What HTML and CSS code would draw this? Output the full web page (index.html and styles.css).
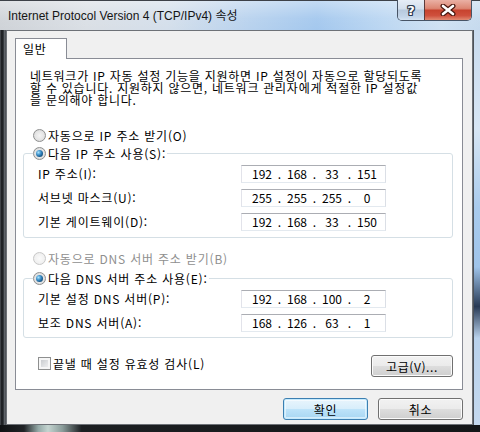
FILE: index.html
```html
<!DOCTYPE html>
<html lang="ko">
<head>
<meta charset="utf-8">
<title>Internet Protocol Version 4 (TCP/IPv4) 속성</title>
<link rel="stylesheet" href="styles.css">
</head>
<body>
<div class="window">
  <div class="titlebar">
    <span class="title">Internet Protocol Version 4 (TCP/IPv4) 속성</span>
    <div class="caption-buttons">
      <span class="cap-btn help">?</span>
      <span class="cap-btn close">
        <svg width="16" height="12" viewBox="0 0 16 12">
          <path d="M3 2 L13 10 M13 2 L3 10" stroke="#4a1810" stroke-width="5" stroke-linecap="round" fill="none"/>
          <path d="M3 2 L13 10 M13 2 L3 10" stroke="#ffffff" stroke-width="2.6" stroke-linecap="round" fill="none"/>
        </svg>
      </span>
    </div>
  </div>
  <div class="middle">
    <div class="frame-left"></div>
    <div class="client">
      <div class="tabs"><span class="tab">일반</span></div>
      <div class="panel">
        <p class="intro">네트워크가 IP 자동 설정 기능을 지원하면 IP 설정이 자동으로 할당되도록<br>할 수 있습니다. 지원하지 않으면, 네트워크 관리자에게 적절한 IP 설정값<br>을 문의해야 합니다.</p>

        <div class="option first"><span class="radio"></span><span>자동으로 IP 주소 받기(O)</span></div>
        <fieldset class="group ip-group">
          <legend class="legend"><span class="radio checked"></span><span>다음 IP 주소 사용(S):</span></legend>
          <div class="fields">
            <span class="label">IP 주소(I):</span>
            <div class="ip"><span>192</span><i>.</i><span>168</span><i>.</i><span>33</span><i>.</i><span>151</span></div>
            <span class="label">서브넷 마스크(U):</span>
            <div class="ip"><span>255</span><i>.</i><span>255</span><i>.</i><span>255</span><i>.</i><span>0</span></div>
            <span class="label">기본 게이트웨이(D):</span>
            <div class="ip"><span>192</span><i>.</i><span>168</span><i>.</i><span>33</span><i>.</i><span>150</span></div>
          </div>
        </fieldset>

        <div class="option second disabled"><span class="radio"></span><span>자동으로 DNS 서버 주소 받기(B)</span></div>
        <fieldset class="group dns-group">
          <legend class="legend"><span class="radio checked"></span><span>다음 DNS 서버 주소 사용(E):</span></legend>
          <div class="fields">
            <span class="label">기본 설정 DNS 서버(P):</span>
            <div class="ip"><span>192</span><i>.</i><span>168</span><i>.</i><span>100</span><i>.</i><span>2</span></div>
            <span class="label">보조 DNS 서버(A):</span>
            <div class="ip"><span>168</span><i>.</i><span>126</span><i>.</i><span>63</span><i>.</i><span>1</span></div>
          </div>
        </fieldset>

        <div class="bottom-row">
          <label class="check"><span class="checkbox"></span><span>끝낼 때 설정 유효성 검사(L)</span></label>
          <span class="button advanced">고급(V)...</span>
        </div>
      </div>
      <div class="dialog-buttons">
        <span class="button default">확인</span>
        <span class="button">취소</span>
      </div>
    </div>
    <div class="frame-right"></div>
  </div>
  <div class="frame-bottom"></div>
</div>
</body>
</html>
```

FILE: styles.css
```css
* { box-sizing: border-box; }

body {
  margin: 0;
  width: 480px;
  height: 432px;
  overflow: hidden;
  background: #1b1d20;
  font-family: "Noto Sans CJK KR", "Noto Sans", sans-serif;
  font-size: 12px;
  color: #000;
}

.window {
  width: 480px;
  height: 432px;
  display: flex;
  flex-direction: column;
}

.titlebar {
  height: 30px;
  display: flex;
  align-items: flex-start;
  background:
    linear-gradient(180deg, rgba(255,255,255,0.35) 0%, rgba(255,255,255,0.05) 60%, rgba(255,255,255,0) 100%),
    linear-gradient(90deg, #cfd3d8 0%, #dadfe5 18%, #d4dfeb 35%, #b8d2ee 52%, #a4c8ee 66%, #bcd7f2 80%, #cfe1f3 92%, #c6daee 100%);
  border-top: 1px solid #3d4148;
}

.title {
  flex: 1;
  margin: 7px 0 0 8px;
  font-family: "Liberation Sans", "Noto Sans CJK KR", sans-serif;
  font-size: 12px;
  line-height: 16px;
  white-space: nowrap;
  color: #151515;
}

.caption-buttons {
  display: flex;
  height: 21px;
  margin-top: -1px;
  margin-right: 8px;
  border: 1px solid #475466;
  border-top: none;
  border-radius: 0 0 5px 5px;
  overflow: hidden;
}

.cap-btn {
  display: flex;
  align-items: center;
  justify-content: center;
  height: 100%;
}

.help {
  width: 26px;
  background: linear-gradient(180deg, #e6edf6 0%, #d3dfec 45%, #b7c9dd 50%, #c4d6ea 85%, #d6e4f2 100%);
  font-family: "DejaVu Sans", sans-serif;
  font-weight: bold;
  font-size: 13px;
  line-height: 1;
  color: #fff;
  text-shadow: 1px 0 0 #2d3b4e, -1px 0 0 #2d3b4e, 0 1px 0 #2d3b4e, 0 -1px 0 #2d3b4e,
               1px 1px 0 #2d3b4e, -1px -1px 0 #2d3b4e, 1px -1px 0 #2d3b4e, -1px 1px 0 #2d3b4e;
}

.close {
  width: 47px;
  border-left: 1px solid #5b3b3b;
  background: linear-gradient(180deg, #eab0a4 0%, #dc8673 42%, #c7432f 52%, #cf503d 78%, #e18a72 100%);
}

.middle {
  flex: 1;
  display: flex;
}

.frame-left {
  width: 6px;
  background: linear-gradient(90deg, #50545a 0%, #15171a 30%, #2c3034 55%, #6a6f75 80%, #3c4045 100%);
}

.frame-right {
  width: 7px;
  background: linear-gradient(180deg, #c9dbee 0%, #d7e6f4 25%, #a9cbed 45%, #9fc4ea 60%, #283a55 70%, #b9d2ec 78%, #c4d8ee 100%);
  border-left: 1px solid #4d5258;
}

.frame-bottom {
  height: 7px;
  background: linear-gradient(90deg, #101214 0%, #202326 5%, #95aaa8 8%, #c4d4d0 10%, #8a9c9a 13%, #1c1f22 17%, #141618 100%);
}

.client {
  width: 467px;
  border: 1px solid #6d7177;
  background: #f0f0f0;
  padding: 7px 9px 0 8px;
  display: flex;
  flex-direction: column;
}

.tabs {
  display: flex;
  height: 20px;
}

.tab {
  position: relative;
  z-index: 1;
  width: 52px;
  height: 21px;
  border: 1px solid #898c95;
  border-bottom: none;
  background: #fff;
  padding-left: 7px;
  line-height: 20px;
  letter-spacing: 0.6px;
}

.panel {
  width: 448px;
  height: 332px;
  border: 1px solid #898c95;
  background: #fff;
}

.intro {
  margin: 0;
  padding: 11px 0 0 14px;
  line-height: 12px;
  white-space: nowrap;
  letter-spacing: 0.75px;
}

.option {
  display: flex;
  align-items: center;
  gap: 2px;
  height: 16px;
  padding-left: 17px;
  white-space: nowrap;
  letter-spacing: 0.8px;
}

.option.first { margin-top: 21px; }
.option.second { margin-top: 12px; }
.option.disabled { color: #8f8f8f; }

.radio {
  width: 13px;
  height: 13px;
  flex: none;
  border-radius: 50%;
  border: 1px solid #8e8f8f;
  background: radial-gradient(circle at 50% 50%, #f4f4f4 0%, #e4e4e4 55%, #cfcfcf 100%);
  display: flex;
  align-items: center;
  justify-content: center;
}

.option.disabled .radio {
  border-color: #c8c8c8;
  background: radial-gradient(circle at 50% 50%, #fbfbfb 0%, #f1f1f1 60%, #e6e6e6 100%);
}

.radio.checked::after {
  content: "";
  width: 7px;
  height: 7px;
  border-radius: 50%;
  background: radial-gradient(circle at 35% 35%, #a7e4ff 0%, #3a8cc6 40%, #12507f 75%, #0b3558 100%);
}

.group {
  margin: 2px 9px 0 7px;
  padding: 4px 0 6px 0;
  min-width: 0;
  border: 1px solid #d5dfe5;
  border-radius: 3px;
}

.dns-group {
  margin-top: 4px;
  padding-bottom: 5px;
}

.legend {
  display: flex;
  align-items: center;
  gap: 2px;
  height: 16px;
  margin-left: 9px;
  padding: 0 1px 0 0;
  white-space: nowrap;
  letter-spacing: 0.8px;
}

.fields {
  display: grid;
  grid-template-columns: 203px 145px;
  grid-auto-rows: 18px;
  row-gap: 6px;
  align-items: center;
  padding-left: 14px;
}

.label {
  white-space: nowrap;
  line-height: 18px;
  letter-spacing: 0.8px;
}

.ip {
  width: 145px;
  height: 18px;
  display: flex;
  align-items: center;
  padding-left: 6px;
  border: 1px solid;
  border-color: #abadb3 #dbdfe6 #e3e9ef #e2e3ea;
  background: #fff;
  line-height: 16px;
}

.ip span {
  width: 28px;
  text-align: center;
}

.ip i {
  width: 7px;
  font-style: normal;
  text-align: center;
}

.bottom-row {
  display: flex;
  justify-content: space-between;
  align-items: flex-start;
  height: 22px;
  margin: 17px 9px 0 22px;
}

.check {
  display: flex;
  align-items: center;
  gap: 2px;
  height: 17px;
  white-space: nowrap;
  letter-spacing: 0.8px;
}

.checkbox {
  width: 13px;
  height: 13px;
  border: 1px solid #8e8f8f;
  background: linear-gradient(135deg, #bfc2c6 0%, #e2e3e5 60%, #f4f4f4 100%);
  box-shadow: inset 0 0 0 2px #f6f6f6;
}

.button {
  display: flex;
  align-items: center;
  justify-content: center;
  width: 85px;
  height: 22px;
  border: 1px solid #707070;
  border-radius: 3px;
  background: linear-gradient(180deg, #f2f2f2 0%, #ebebeb 48%, #dddddd 52%, #cfcfcf 100%);
  box-shadow: inset 0 0 0 1px #fbfbfb;
  white-space: nowrap;
  letter-spacing: 0.6px;
}

.button.advanced {
  width: 82px;
}

.button.default {
  border-color: #3c7fb1;
  background: linear-gradient(180deg, #e9f5fc 0%, #d8eefb 48%, #bde3f9 52%, #a7d6f3 100%);
  box-shadow: inset 0 0 0 1px #c5eafd, inset 0 0 0 2px rgba(255,255,255,0.5);
}

.dialog-buttons {
  display: flex;
  justify-content: flex-end;
  gap: 10px;
  margin-top: 8px;
}
```
